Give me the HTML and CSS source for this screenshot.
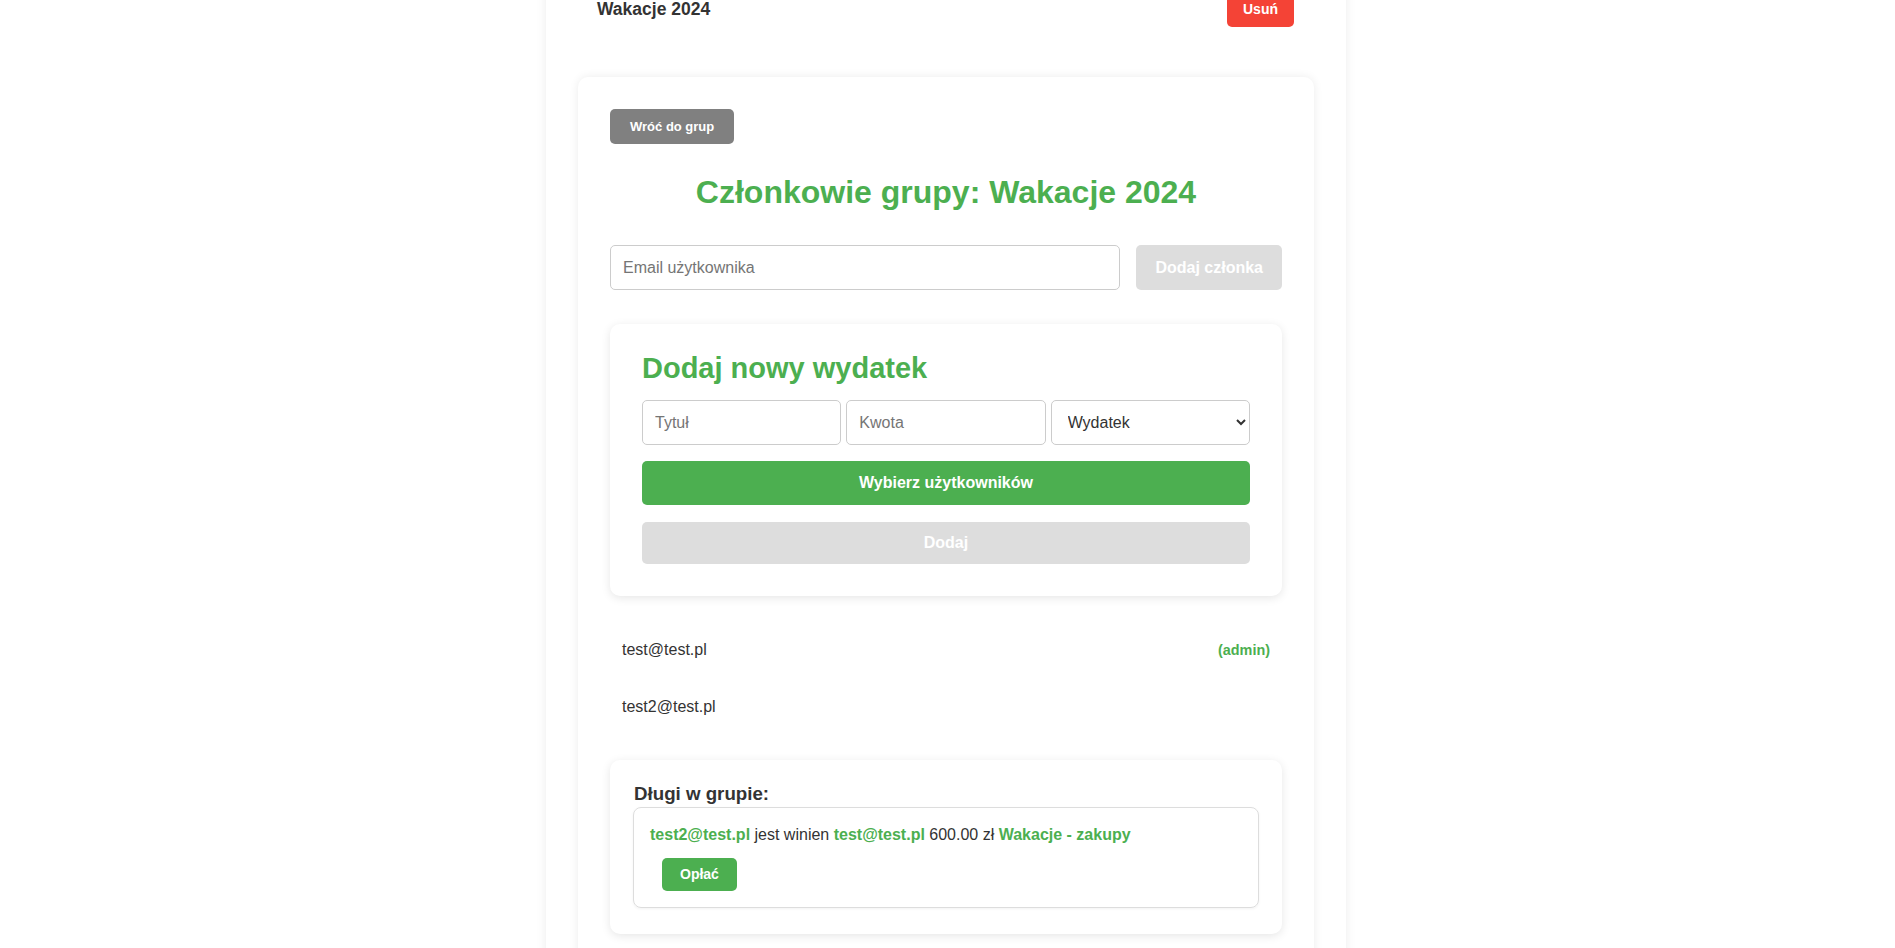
FILE: index.html
```html
<!DOCTYPE html>
<html lang="pl">
<head>
    <meta charset="UTF-8">
    <meta name="viewport" content="width=device-width, initial-scale=1.0">
    <title>Członkowie grupy</title>
    <link rel="stylesheet" href="styles.css">
</head>
<body>
    <div class="container">
        <div class="group-item">
            <span class="group-name">Wakacje 2024</span>
            <button class="delete-button">Usuń</button>
        </div>

        <div class="group-details">
            <button class="back-button">Wróć do grup</button>
            <h1>Członkowie grupy: Wakacje 2024</h1>

            <div class="add-member">
                <input type="email" placeholder="Email użytkownika">
                <button class="add-member-button" disabled>Dodaj członka</button>
            </div>

            <div class="card expense-form">
                <h2>Dodaj nowy wydatek</h2>
                <div class="expense-inputs">
                    <input type="text" placeholder="Tytuł">
                    <input type="number" placeholder="Kwota">
                    <select>
                        <option>Wydatek</option>
                        <option>Przychód</option>
                    </select>
                </div>
                <button class="green-button wide">Wybierz użytkowników</button>
                <button class="gray-button wide" disabled>Dodaj</button>
            </div>

            <ul class="members">
                <li><span>test@test.pl</span><span class="admin">(admin)</span></li>
                <li><span>test2@test.pl</span></li>
            </ul>

            <div class="card debts">
                <h3>Długi w grupie:</h3>
                <div class="debt-item">
                    <p><b>test2@test.pl</b> jest winien <b>test@test.pl</b> 600.00 zł <b>Wakacje - zakupy</b></p>
                    <button class="green-button pay-button">Opłać</button>
                </div>
            </div>
        </div>
    </div>
</body>
</html>
```

FILE: styles.css
```css
body {
    font-family: "Liberation Sans", Arial, sans-serif;
    margin: 0;
    padding-right: 3px;
    background-color: #fff;
    color: #333;
}
button {
    font-family: inherit;
    font-weight: bold;
    color: #fff;
    border: none;
    border-radius: 5px;
    cursor: pointer;
}
input,
select {
    font-family: inherit;
    font-size: 16px;
    padding: 12px;
    border: 1px solid #ccc;
    border-radius: 5px;
    box-sizing: border-box;
    height: 45px;
}
.container {
    width: 800px;
    box-sizing: border-box;
    margin: -9px auto 0;
    padding: 0 32px 40px;
    background-color: #fff;
    box-shadow: 0 0 10px rgba(0, 0, 0, 0.08);
}
.group-item {
    display: flex;
    justify-content: space-between;
    align-items: center;
    padding: 0 20px 0 19px;
    margin-bottom: 50px;
}
.group-name {
    font-weight: bold;
    font-size: 17.5px;
}
.delete-button {
    background-color: #f44336;
    font-size: 14px;
    padding: 10px 16px;
}
.group-details {
    padding: 32px 32px 40px;
    border-radius: 10px;
    box-shadow: 0 0 10px rgba(0, 0, 0, 0.08);
    min-height: 900px;
}
.back-button {
    background-color: #808080;
    font-size: 13px;
    padding: 10px 20px;
}
h1 {
    color: #4CAF50;
    text-align: center;
    font-size: 32px;
    margin: 30px 0 34px;
}
.add-member {
    display: flex;
    gap: 16px;
}
.add-member input {
    flex: 1;
}
.add-member-button {
    background-color: #ddd;
    font-size: 16px;
    padding: 0 19px;
    height: 45px;
}
.card {
    background-color: #fff;
    border-radius: 10px;
    box-shadow: 0 2px 10px rgba(0, 0, 0, 0.1);
}
.expense-form {
    margin-top: 34px;
    padding: 28px 32px 32px;
}
.expense-form h2 {
    color: #4CAF50;
    font-size: 29px;
    margin: 0 0 15px;
}
.expense-inputs {
    display: flex;
    gap: 5px;
    margin-bottom: 16px;
}
.expense-inputs input,
.expense-inputs select {
    flex: 1;
    width: 0;
}
.expense-inputs select {
    background-color: #fff;
    color: #333;
}
.green-button {
    background-color: #4CAF50;
}
.gray-button {
    background-color: #ddd;
}
.wide {
    display: block;
    width: 100%;
    height: 44px;
    font-size: 16px;
}
.wide + .wide {
    margin-top: 17px;
    height: 42px;
}
.members {
    list-style: none;
    padding: 0;
    margin: 25px 0;
}
.members li {
    display: flex;
    justify-content: space-between;
    align-items: center;
    padding: 19.5px 12px;
    font-size: 16px;
}
.admin {
    color: #4CAF50;
    font-weight: bold;
    font-size: 0.9em;
}
.debts {
    padding: 23px 23px 26px 23px;
}
.debts h3 {
    font-size: 18.72px;
    margin: 0 0 2px 1px;
}
.debt-item {
    border: 1px solid #ddd;
    border-radius: 8px;
    padding: 18px 15px 16px 16px;
    box-shadow: 0 1px 3px rgba(0, 0, 0, 0.05);
}
.debt-item p {
    margin: 0 0 14px;
    font-size: 16px;
}
.debt-item b {
    color: #4CAF50;
}
.pay-button {
    margin-left: 12px;
    font-size: 14px;
    padding: 8px 18px;
    line-height: 17px;
}
```
